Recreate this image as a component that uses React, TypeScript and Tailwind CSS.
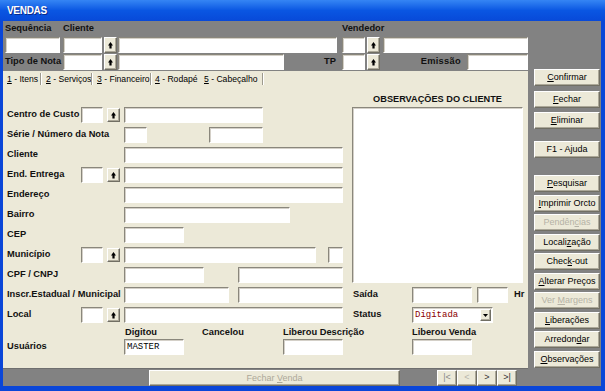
import React from "react";

const lbl = "shrink-0 whitespace-nowrap text-[9.3px] font-bold leading-none text-[#111]";
const field =
  "shrink-0 bg-white border border-t-[#8a877c] border-l-[#8a877c] border-b-white border-r-white shadow-[inset_1px_1px_0_#d4d0c8]";
const raised =
  "shrink-0 bg-[#ece9d8] border border-t-white border-l-white border-b-[#716f64] border-r-[#716f64] shadow-[inset_-1px_-1px_0_#aca899]";

function Field({ w, children }: { w: string; children?: React.ReactNode }) {
  return <div className={`${field} h-[16px] ${w}`}>{children}</div>;
}

function Lookup({ tall }: { tall?: boolean }) {
  return (
    <div className={`${raised} ${tall ? "h-[16px]" : "h-[14px]"} flex w-[13px] items-center justify-center`}>
      <svg width="5" height="7" viewBox="0 0 5 7">
        <path d="M2.5 0L5 3.5H3.6V6.5H1.4V3.5H0Z" fill="#000" />
      </svg>
    </div>
  );
}

function Row({ label, lookup, children }: { label: string; lookup?: boolean; children?: React.ReactNode }) {
  return (
    <div className="flex h-[16px] items-center">
      <span className={`${lbl} ${lookup ? "w-[74px]" : "w-[117px]"}`}>{label}</span>
      {lookup && (
        <>
          <Field w="w-[22px]" />
          <div className="ml-[4px] mr-[4px]">
            <Lookup />
          </div>
        </>
      )}
      {children}
    </div>
  );
}

function SideButton({ children, disabled }: { children: React.ReactNode; disabled?: boolean }) {
  return (
    <div
      className={`${raised} flex h-[17px] w-[66px] items-center justify-center text-[9px] leading-none ${
        disabled ? "text-[#b5b2a6]" : "text-black"
      }`}
    >
      <span className="whitespace-nowrap">{children}</span>
    </div>
  );
}

const u = "underline underline-offset-1";
const sep = "h-[12px] w-[2px] shrink-0 border-l border-r border-l-[#9d9a8e] border-r-white";

export default function App() {
  return (
    <div className="flex h-[391px] w-[605px] flex-col overflow-hidden bg-[#0a46d8] pb-[5px] pl-[3px] pr-[4px] font-['Liberation_Sans',Arial,sans-serif]">
      {/* title bar */}
      <div className="-ml-[3px] -mr-[4px] flex h-[21px] shrink-0 items-center bg-linear-to-b from-[#3585f4] via-[#0a56e2] to-[#0849d8] pl-[7px]">
        <span className="text-[10px] font-bold tracking-[-0.3px] text-white [text-shadow:1px_1px_0_#0a2a8a]">VENDAS</span>
      </div>

      <div className="flex flex-1 bg-[#828282]">
        {/* left side */}
        <div className="flex w-[525px] flex-col">
          {/* header */}
          <div className="flex h-[50px] flex-col pl-[2px]">
            <div className="flex h-[16px] items-center">
              <span className={`${lbl} w-[58px]`}>Sequência</span>
              <span className={`${lbl} w-[279px]`}>Cliente</span>
              <span className={lbl}>Vendedor</span>
            </div>
            <div className="flex h-[16px] items-center">
              <Field w="w-[55px]" />
              <div className="ml-[3px]">
                <Field w="w-[39px]" />
              </div>
              <div className="ml-[2px]">
                <Lookup tall />
              </div>
              <div className="ml-[1px]">
                <Field w="w-[219px]" />
              </div>
              <div className="ml-[5px]">
                <Field w="w-[23px]" />
              </div>
              <div className="ml-[2px]">
                <Lookup tall />
              </div>
              <div className="ml-[3px]">
                <Field w="w-[145px]" />
              </div>
            </div>
            <div className="mt-[1px] flex h-[16px] items-center">
              <span className={`${lbl} w-[58px]`}>Tipo de Nota</span>
              <Field w="w-[39px]" />
              <div className="ml-[2px]">
                <Lookup tall />
              </div>
              <div className="ml-[1px]">
                <Field w="w-[166px]" />
              </div>
              <span className={`${lbl} w-[58px] pr-[6px] text-right`}>TP</span>
              <Field w="w-[23px]" />
              <div className="ml-[2px]">
                <Lookup tall />
              </div>
              <span className={`${lbl} w-[87px] pr-[6px] text-right tracking-[0.3px]`}>Emissão</span>
              <Field w="w-[61px]" />
            </div>
          </div>

          {/* tabs */}
          <div className="flex h-[16px] items-center whitespace-nowrap bg-[#ece9d8] text-[8.6px] leading-none text-black">
            <span className="w-[37px] shrink-0 pl-[4px]">
              <span className={u}>1</span> - Itens
            </span>
            <span className={sep} />
            <span className="w-[49px] shrink-0 pl-[4px]">
              <span className={u}>2</span> - Serviços
            </span>
            <span className={sep} />
            <span className="w-[57px] shrink-0 pl-[4px]">
              <span className={u}>3</span> - Financeiro
            </span>
            <span className={sep} />
            <span className="w-[52px] shrink-0 pl-[3px]">
              <span className={u}>4</span> - Rodapé
            </span>
            <span className="w-[58px] shrink-0">
              <span className={u}>5</span> - Cabeçalho
            </span>
            <span className={sep} />
          </div>

          {/* panel */}
          <div className="flex h-[281px] flex-col bg-[#ece9d8]">
            <div className="flex">
              <div className="flex w-[347px] flex-col gap-[4px] pl-[4px] pt-[20px]">
                <Row label="Centro de Custo" lookup>
                  <Field w="w-[139px]" />
                </Row>
                <Row label="Série / Número da Nota">
                  <Field w="w-[23px]" />
                  <div className="ml-[62px]">
                    <Field w="w-[54px]" />
                  </div>
                </Row>
                <Row label="Cliente">
                  <Field w="w-[219px]" />
                </Row>
                <Row label="End. Entrega" lookup>
                  <Field w="w-[219px]" />
                </Row>
                <Row label="Endereço">
                  <Field w="w-[219px]" />
                </Row>
                <Row label="Bairro">
                  <Field w="w-[166px]" />
                </Row>
                <Row label="CEP">
                  <Field w="w-[60px]" />
                </Row>
                <Row label="Município" lookup>
                  <Field w="w-[192px]" />
                  <div className="ml-[12px]">
                    <Field w="w-[15px]" />
                  </div>
                </Row>
                <Row label="CPF / CNPJ">
                  <Field w="w-[80px]" />
                  <div className="ml-[34px]">
                    <Field w="w-[105px]" />
                  </div>
                </Row>
                <Row label="Inscr.Estadual / Municipal">
                  <Field w="w-[105px]" />
                  <div className="ml-[9px]">
                    <Field w="w-[105px]" />
                  </div>
                </Row>
                <Row label="Local" lookup>
                  <Field w="w-[219px]" />
                </Row>
              </div>

              {/* observations */}
              <div className="flex w-[175px] flex-col pl-[2px]">
                <div className="flex h-[20px] w-[171px] items-end justify-center pb-[3px]">
                  <span className="text-[9.2px] font-bold leading-none text-[#111]">OBSERVAÇÕES DO CLIENTE</span>
                </div>
                <div className={`${field} h-[176px] w-[171px]`} />
                <div className="mt-[4px] flex h-[16px] items-center">
                  <span className={`${lbl} w-[60px] pl-[1px]`}>Saída</span>
                  <Field w="w-[60px]" />
                  <div className="ml-[5px]">
                    <Field w="w-[31px]" />
                  </div>
                  <span className={`${lbl} ml-[6px]`}>Hr</span>
                </div>
                <div className="mt-[4px] flex h-[16px] items-center">
                  <span className={`${lbl} w-[60px] pl-[1px]`}>Status</span>
                  <div className={`${field} flex h-[16px] w-[81px] items-center`}>
                    <span className="flex-1 pl-[2px] font-['Liberation_Mono',monospace] text-[9px] leading-none text-[#8b0000]">
                      Digitada
                    </span>
                    <div className={`${raised} mr-[1px] flex h-[12px] w-[11px] items-center justify-center`}>
                      <svg width="5" height="3" viewBox="0 0 5 3">
                        <path d="M0 0H5L2.5 3Z" fill="#000" />
                      </svg>
                    </div>
                  </div>
                </div>
              </div>
            </div>

            {/* users */}
            <div className="mt-[4px] flex pl-[4px]">
              <span className={`${lbl} w-[117px] self-end pb-[4px]`}>Usuários</span>
              <div className="flex w-[78px] flex-col gap-[1px]">
                <span className={`${lbl} h-[11px] pl-[1px] pt-[1px]`}>Digitou</span>
                <Field w="w-[60px]">
                  <span className="block pl-[2px] pt-[3px] font-['Liberation_Mono',monospace] text-[9px] leading-none text-black">
                    MASTER
                  </span>
                </Field>
              </div>
              <div className="w-[81px]">
                <span className={`${lbl} block h-[11px] pt-[1px]`}>Cancelou</span>
              </div>
              <div className="flex w-[129px] flex-col gap-[1px]">
                <span className={`${lbl} h-[11px] pt-[1px]`}>Liberou Descrição</span>
                <Field w="w-[60px]" />
              </div>
              <div className="flex flex-col gap-[1px]">
                <span className={`${lbl} h-[11px] pt-[1px]`}>Liberou Venda</span>
                <Field w="w-[60px]" />
              </div>
            </div>
          </div>

          {/* bottom bar */}
          <div className="flex h-[18px] items-start border-t border-t-[#6f6f6f] pt-[1px]">
            <div
              className={`${raised} ml-[146px] flex h-[16px] w-[251px] items-center justify-center text-[9px] leading-none text-[#aca899]`}
            >
              <span>
                Fechar <span className={u}>V</span>enda
              </span>
            </div>
            <div className="ml-[37px] flex">
              <div className={`${raised} flex h-[16px] w-[20px] items-center justify-center text-[9px] text-[#8a8a8a]`}>|&lt;</div>
              <div className={`${raised} flex h-[16px] w-[20px] items-center justify-center text-[9px] text-[#b8b6ac]`}>&lt;</div>
              <div className={`${raised} flex h-[16px] w-[20px] items-center justify-center text-[9px] text-[#333]`}>&gt;</div>
              <div className={`${raised} flex h-[16px] w-[20px] items-center justify-center text-[9px] text-[#333]`}>&gt;|</div>
            </div>
          </div>
        </div>

        {/* right buttons */}
        <div className="flex w-[73px] flex-col pl-[6px] pt-[48px]">
          <SideButton>
            <span className={u}>C</span>onfirmar
          </SideButton>
          <div className="mt-[5px]">
            <SideButton>
              <span className={u}>F</span>echar
            </SideButton>
          </div>
          <div className="mt-[4px]">
            <SideButton>
              <span className={u}>E</span>liminar
            </SideButton>
          </div>
          <div className="mt-[12px]">
            <SideButton>F1 - Ajuda</SideButton>
          </div>
          <div className="mt-[17px] flex flex-col gap-[2.5px]">
            <SideButton>
              <span className={u}>P</span>esquisar
            </SideButton>
            <SideButton>
              <span className={u}>I</span>mprimir Orcto
            </SideButton>
            <SideButton disabled>
              Pendên<span className={u}>c</span>ias
            </SideButton>
            <SideButton>
              Locali<span className={u}>z</span>ação
            </SideButton>
            <SideButton>
              Chec<span className={u}>k</span>-out
            </SideButton>
            <SideButton>
              <span className={u}>A</span>lterar Preços
            </SideButton>
            <SideButton disabled>
              Ver <span className={u}>M</span>argens
            </SideButton>
            <SideButton>
              <span className={u}>L</span>iberações
            </SideButton>
            <SideButton>
              Arredon<span className={u}>d</span>ar
            </SideButton>
            <SideButton>
              <span className={u}>O</span>bservações
            </SideButton>
          </div>
        </div>
      </div>
    </div>
  );
}
